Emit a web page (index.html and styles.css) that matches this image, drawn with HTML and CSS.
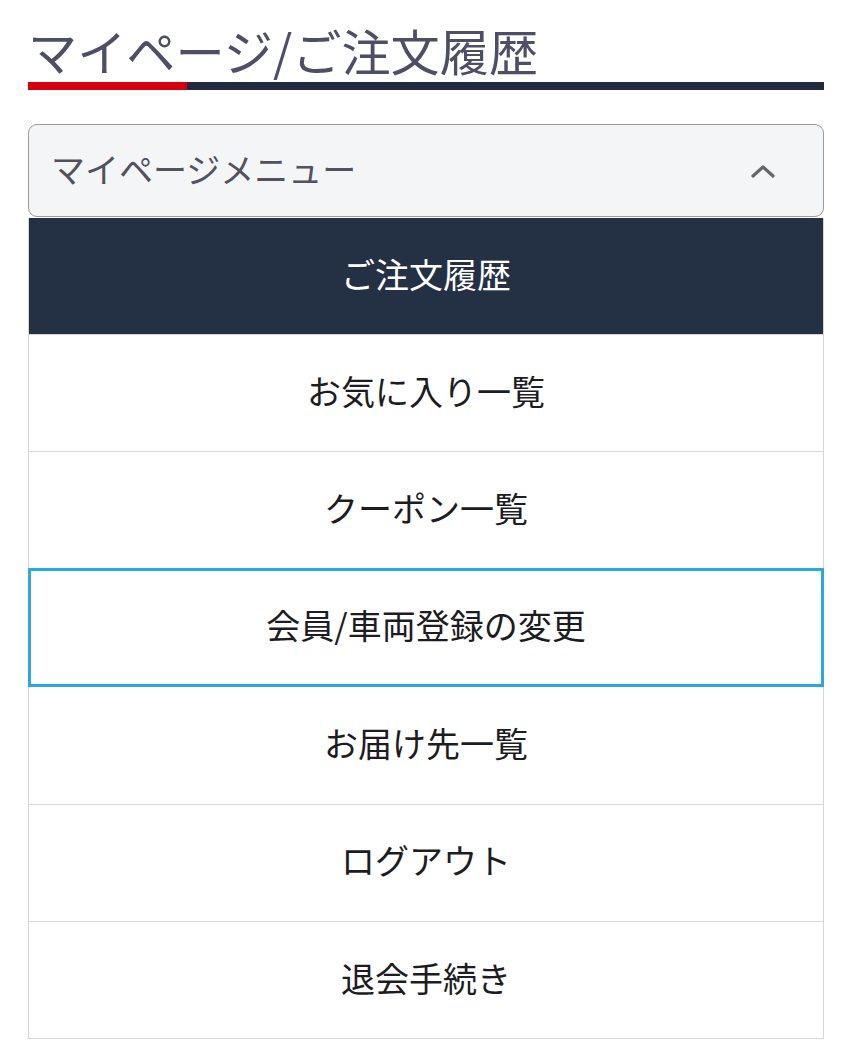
FILE: index.html
```html
<!DOCTYPE html>
<html lang="ja">
<head>
<meta charset="utf-8">
<title>マイページ/ご注文履歴</title>
<link rel="stylesheet" href="styles.css">
</head>
<body>
<div class="page">
  <h1 class="title">マイページ/ご注文履歴</h1>
  <div class="title-bar"><span class="bar-accent"></span><span class="bar-rest"></span></div>

  <div class="dropdown">
    <span class="dropdown-label">マイページメニュー</span>
    <svg class="chevron" width="24" height="14" viewBox="0 0 24 14"><polyline points="2,12 12,3 22,12" fill="none" stroke="#666" stroke-width="3.2" stroke-linecap="round" stroke-linejoin="round"/></svg>
  </div>

  <ul class="menu-list">
    <li class="menu-item active">ご注文履歴</li>
    <li class="menu-item">お気に入り一覧</li>
    <li class="menu-item">クーポン一覧</li>
    <li class="menu-item focused">会員/車両登録の変更</li>
    <li class="menu-item">お届け先一覧</li>
    <li class="menu-item">ログアウト</li>
    <li class="menu-item">退会手続き</li>
  </ul>
</div>
</body>
</html>
```

FILE: styles.css
```css
html, body {
  margin: 0;
  padding: 0;
  background: #ffffff;
}

body {
  font-family: "Noto Sans CJK JP", "Noto Sans", sans-serif;
}

.page {
  padding: 0 28px;
}

.title {
  margin: 0;
  padding-top: 21px;
  font-size: 49.2px;
  font-weight: 400;
  line-height: 58px;
  color: #4e4e66;
  letter-spacing: 0;
}

.title-bar {
  display: flex;
  height: 8px;
  margin-top: 3px;
}

.bar-accent {
  width: 159px;
  background: #d7000f;
}

.bar-rest {
  flex: 1;
  background: #232a3d;
}

.dropdown {
  margin-top: 34px;
  height: 91px;
  box-sizing: content-box;
  border: 1.5px solid #9b9b9b;
  border-radius: 9px;
  background: #f4f5f7;
  display: flex;
  align-items: center;
  justify-content: space-between;
  padding: 0 48px 0 22px;
}

.dropdown-label {
  font-size: 34px;
  color: #52525c;
  padding-bottom: 4px;
}

.chevron {
  display: block;
}

.menu-list {
  list-style: none;
  margin: 1px 0 0;
  padding: 0;
  border-left: 1px solid #d6d6d6;
  border-right: 1px solid #d6d6d6;
  border-bottom: 1.5px solid #d6d6d6;
}

.menu-item {
  height: 110.4px;
  padding-bottom: 6px;
  border-top: 1px solid #d6d6d6;
  display: flex;
  align-items: center;
  justify-content: center;
  font-size: 34px;
  font-weight: 400;
  color: #1c1c22;
  background: #ffffff;
}

.menu-item.active {
  height: 110px;
  border-top: 0;
  background: #243145;
  color: #ffffff;
}

.menu-item.focused {
  position: relative;
  outline: 3px solid #2aa8e2;
  outline-offset: -2px;
}
```
